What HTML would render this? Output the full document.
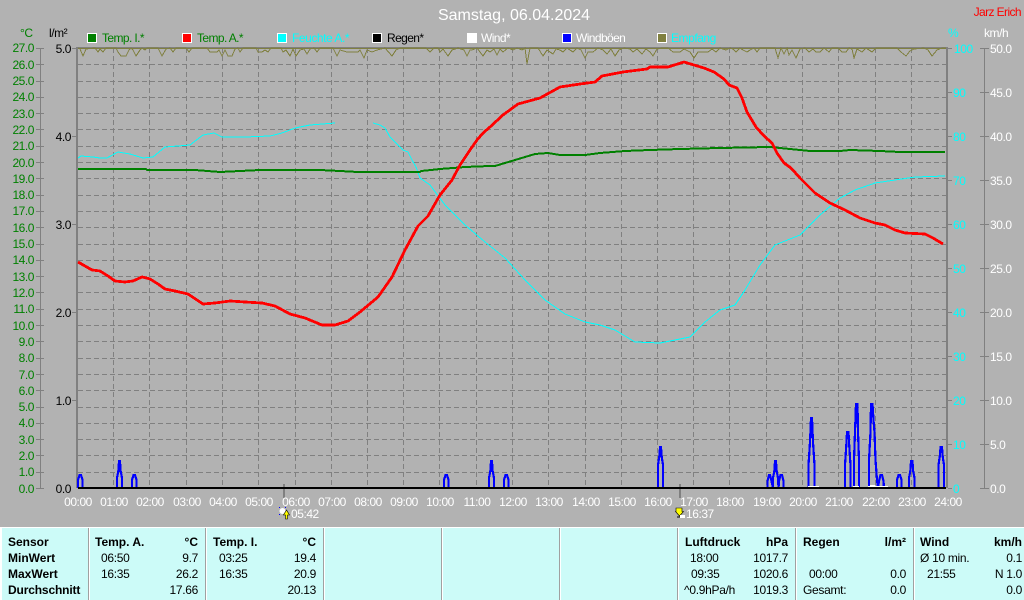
<!DOCTYPE html>
<html><head><meta charset="utf-8"><title>Wetter</title>
<style>
html,body{margin:0;padding:0;background:#b2b2b2;width:1024px;height:600px;overflow:hidden}
svg{display:block;font-family:"Liberation Sans",sans-serif;font-size:12px}
text{letter-spacing:-.45px}
.g text{fill:#008000}
.k text{fill:#000}
.c text{fill:#0ff}
.w text{fill:#fff}
.b{font-weight:bold}
.r{text-anchor:end}
.m{text-anchor:middle}
.t text{fill:#000;letter-spacing:-.3px}
.t text.b{letter-spacing:0}
.t text.d{letter-spacing:-.15px}
.cr{shape-rendering:crispEdges}
</style></head><body>
<svg width="1024" height="600" viewBox="0 0 1024 600" xmlns="http://www.w3.org/2000/svg">
<rect width="1024" height="600" fill="#b2b2b2"/>
<text x="514" y="20" class="m" fill="#fff" style="font-size:16px;letter-spacing:0">Samstag, 06.04.2024</text>
<text x="1021" y="16" class="r" fill="#f00" style="letter-spacing:-.6px">Jarz Erich</text>

<g fill="none" stroke="#808080" stroke-dasharray="5 3" stroke-width="1" class="cr">
<path d="M78 64.5H946M78 81.5H946M78 97.5H946M78 113.5H946M78 129.5H946M78 146.5H946M78 162.5H946M78 178.5H946M78 195.5H946M78 211.5H946M78 227.5H946M78 244.5H946M78 260.5H946M78 276.5H946M78 292.5H946M78 309.5H946M78 325.5H946M78 341.5H946M78 358.5H946M78 374.5H946M78 390.5H946M78 407.5H946M78 423.5H946M78 439.5H946M78 455.5H946M78 472.5H946"/>
<path d="M113.5 48V488M149.5 48V488M186.5 48V488M222.5 48V488M258.5 48V488M295.5 48V488M331.5 48V488M367.5 48V488M403.5 48V488M439.5 48V488M476.5 48V488M512.5 48V488M548.5 48V488M585.5 48V488M621.5 48V488M657.5 48V488M693.5 48V488M729.5 48V488M766.5 48V488M802.5 48V488M838.5 48V488M875.5 48V488M911.5 48V488"/>
</g>

<!-- axes -->
<g fill="#808080">
<rect x="76" y="47" width="872" height="2"/>
<rect x="76" y="47" width="2" height="441"/>
<rect x="946" y="47" width="2" height="441"/>
<rect x="283" y="484" width="2" height="14"/>
<rect x="679" y="484" width="2" height="14"/>
</g>
<g fill="none" stroke="#808080" class="cr">
<path d="M40.5 48V488M36 48.5H44M36 64.5H44M36 81.5H44M36 97.5H44M36 113.5H44M36 129.5H44M36 146.5H44M36 162.5H44M36 178.5H44M36 195.5H44M36 211.5H44M36 227.5H44M36 244.5H44M36 260.5H44M36 276.5H44M36 292.5H44M36 309.5H44M36 325.5H44M36 341.5H44M36 358.5H44M36 374.5H44M36 390.5H44M36 407.5H44M36 423.5H44M36 439.5H44M36 455.5H44M36 472.5H44M36 488.5H44"/>
<path d="M72 48.5H77M72 136.5H77M72 224.5H77M72 312.5H77M72 400.5H77"/>
<path d="M948 48.5H952M948 92.5H952M948 136.5H952M948 180.5H952M948 224.5H952M948 268.5H952M948 312.5H952M948 356.5H952M948 400.5H952M948 444.5H952M948 488.5H952"/>
<path d="M984.5 48V488M980 48.5H989M980 92.5H989M980 136.5H989M980 180.5H989M980 224.5H989M980 268.5H989M980 312.5H989M980 356.5H989M980 400.5H989M980 444.5H989M980 488.5H989"/>
</g>

<!-- axis labels -->
<g class="g">
<text x="20" y="37">°C</text>
<text x="34" y="52" class="r">27.0</text><text x="34" y="69" class="r">26.0</text><text x="34" y="85" class="r">25.0</text><text x="34" y="101" class="r">24.0</text><text x="34" y="118" class="r">23.0</text><text x="34" y="134" class="r">22.0</text><text x="34" y="150" class="r">21.0</text><text x="34" y="167" class="r">20.0</text><text x="34" y="183" class="r">19.0</text><text x="34" y="199" class="r">18.0</text><text x="34" y="215" class="r">17.0</text><text x="34" y="232" class="r">16.0</text><text x="34" y="248" class="r">15.0</text><text x="34" y="264" class="r">14.0</text><text x="34" y="281" class="r">13.0</text><text x="34" y="297" class="r">12.0</text><text x="34" y="313" class="r">11.0</text><text x="34" y="330" class="r">10.0</text><text x="34" y="346" class="r">9.0</text><text x="34" y="362" class="r">8.0</text><text x="34" y="379" class="r">7.0</text><text x="34" y="395" class="r">6.0</text><text x="34" y="411" class="r">5.0</text><text x="34" y="427" class="r">4.0</text><text x="34" y="444" class="r">3.0</text><text x="34" y="460" class="r">2.0</text><text x="34" y="476" class="r">1.0</text><text x="34" y="493" class="r">0.0</text>
</g>
<g class="k">
<text x="49" y="37">l/m²</text>
<text x="71" y="53" class="r">5.0</text><text x="71" y="141" class="r">4.0</text><text x="71" y="229" class="r">3.0</text><text x="71" y="317" class="r">2.0</text><text x="71" y="405" class="r">1.0</text><text x="71" y="493" class="r">0.0</text>
</g>
<g class="c">
<text x="948" y="37">%</text>
<text x="954" y="53">100</text><text x="953" y="97">90</text><text x="953" y="141">80</text><text x="953" y="185">70</text><text x="953" y="229">60</text><text x="953" y="273">50</text><text x="953" y="317">40</text><text x="953" y="361">30</text><text x="953" y="405">20</text><text x="953" y="449">10</text><text x="953" y="493">0</text>
</g>
<g class="w">
<text x="984" y="37">km/h</text>
<text x="990" y="53">50.0</text><text x="990" y="97">45.0</text><text x="990" y="141">40.0</text><text x="990" y="185">35.0</text><text x="990" y="229">30.0</text><text x="990" y="273">25.0</text><text x="990" y="317">20.0</text><text x="990" y="361">15.0</text><text x="990" y="405">10.0</text><text x="990" y="449">5.0</text><text x="990" y="493">0.0</text>
</g>

<!-- legend -->
<g stroke="#fff" stroke-width="1" class="cr">
<rect x="87.5" y="33.5" width="9" height="9" fill="#008000"/>
<rect x="182.5" y="33.5" width="9" height="9" fill="#f00"/>
<rect x="277.5" y="33.5" width="9" height="9" fill="#0ff"/>
<rect x="372.5" y="33.5" width="9" height="9" fill="#000"/>
<rect x="467.5" y="33.5" width="9" height="9" fill="#fff"/>
<rect x="562.5" y="33.5" width="9" height="9" fill="#00f"/>
<rect x="657.5" y="33.5" width="9" height="9" fill="#808040"/>
</g>
<text x="102" y="42" fill="#008000" style="letter-spacing:-.6px">Temp. I.*</text>
<text x="197" y="42" fill="#008000" style="letter-spacing:-.6px">Temp. A.*</text>
<text x="292" y="42" fill="#0ff">Feuchte A.*</text>
<text x="387" y="42" fill="#000" style="letter-spacing:-.6px">Regen*</text>
<text x="481" y="42" fill="#fff" style="letter-spacing:-.6px">Wind*</text>
<text x="576" y="42" fill="#fff" style="letter-spacing:-.6px">Windböen</text>
<text x="671" y="42" fill="#0ff">Empfang</text>

<!-- reception -->
<polyline fill="none" stroke="#808040" stroke-width="1" class="cr" points="78,48 80,49 83,56 86,49 95,48 98,52 100,49 103,52 106,48 116,48 118,52 121,56 126,56 129,50 131,48 133,50 136,56 140,50 142,48 145,50 147,48 158,48 162,56 166,49 170,48 173,52 176,48 186,48 189,52 192,48 207,48 210,52 217,52 219,50 222,56 225,50 228,56 232,56 235,49 238,48 240,52 243,48 256,48 258,52 262,52 265,50 268,52 271,48 281,48 283,52 286,50 290,56 293,49 296,56 300,50 304,49 307,54 310,49 314,48 317,52 320,48 333,48 337,56 340,50 347,52 358,52 360,50 364,58 367,50 372,52 377,50 385,48 392,56 396,50 400,48 426,48 430,52 434,48 438,48 440,52 443,49 448,56 452,50 458,48 464,50 467,56 470,50 472,50 477,48 483,56 487,50 490,52 494,49 497,55 500,49 503,52 508,48 513,50 517,48 522,50 525,48 527,64 530,48 538,48 543,56 547,50 553,54 556,49 560,50 563,52 567,48 573,52 577,48 581,50 585,58 588,52 593,52 598,48 603,50 607,54 611,49 615,56 619,50 624,48 630,49 633,52 637,49 642,54 646,49 650,52 653,56 657,49 662,48 668,48 673,52 680,52 684,49 690,52 694,58 698,52 708,52 712,49 716,52 720,48 726,50 730,48 733,49 736,52 740,48 743,50 747,52 750,50 754,48 757,52 760,48 775,48 778,58 781,48 784,54 787,48 789,55 792,50 796,58 800,49 805,48 809,52 813,49 816,52 820,52 824,48 829,52 832,48 838,48 842,52 846,52 849,48 852,49 854,58 857,49 862,52 866,48 872,52 876,48 897,48 901,52 906,56 910,51 914,49 924,48 928,50 932,56 937,50 942,48 946,48"/>
<rect x="78" y="48" width="868" height="1" fill="#808040"/>

<!-- gusts -->
<g fill="none" stroke="#00f" stroke-width="2.2" class="cr">
<polyline points="78,488 78,480 79.5,475 81,475 82.5,480 82.5,488"/>
<polyline points="117,488 117,478 118.5,470 119,461 120,461 120.5,470 122,478 122,488"/>
<polyline points="132,488 132,480 133.5,475 135,475 136.5,480 136.5,488"/>
<polyline points="444,488 444,480 445.5,475 447,475 448.5,480 448.5,488"/>
<polyline points="489,488 489,478 490.5,470 491,461 492,461 492.5,470 494,478 494,488"/>
<polyline points="504,488 504,480 505.5,475 507,475 508.5,480 508.5,488"/>
<polyline points="658,488 658,465 659.5,455 660,447 661,447 661.5,455 663,465 663,488"/>
<polyline points="767.5,488 767.5,481 769,475 770,475 771.5,481 773,488 773,478 774.5,470 775,461 776,461 776.5,470 778,478 778.5,488 779,481 780.5,475 782,475 783.5,481 783.5,488"/>
<polyline points="808.5,488 808.5,465 810,442 811,418 812,418 813,442 814.5,465 814.5,488"/>
<polyline points="845,488 845,465 846.5,442 847,432 848.5,432 849,442 850.5,465 850.5,488"/>
<polyline points="854,488 854,460 855,432 856,404 857.5,404 858,432 859,460 859,488"/>
<polyline points="869,488 869,460 870.5,432 871,404 872.5,404 873.5,420 874.5,432 875.5,460 877,480 878,488 879,481 880.5,475 882,475 883.5,481 884,488"/>
<polyline points="897,488 897,480 898.5,475 900,475 901.5,480 901.5,488"/>
<polyline points="909,488 909,478 910.5,470 911,461 912.5,461 913,470 914.5,478 914.5,488"/>
<polyline points="938.5,488 938.5,465 940,455 940.5,447 942,447 942.5,455 944,465 944,488"/>
</g>
<g fill="#fff">
<rect x="808" y="486" width="11" height="1"/>
<rect x="853" y="486" width="6" height="1"/>
<rect x="868" y="486" width="20" height="1"/>
<rect x="870" y="485" width="5" height="1"/>
</g>

<!-- humidity -->
<g fill="none" stroke="#0ff" stroke-width="1" class="cr">
<polyline points="78,158 81,156 93,157 100,158 107,158 118,152 130,154 143,158 153,157 165,147 178,146 190,145 203,135 214,133 222,137 245,137 270,136 282,133 295,128 310,125 335,123"/>
<polyline points="373,123 380,125 385,128 390,137 395,142 400,147 403,150 408,152 412,160 416,167 420,178 430,185 445,205 465,225 485,242 505,258 525,280 545,300 565,314 585,322 600,325 615,330 635,342 660,343 690,337 705,322 720,310 735,305 745,290 760,265 775,245 800,235 820,215 840,198 855,190 875,183 895,180 915,177 945,176"/>
</g>

<!-- indoor temp -->
<polyline fill="none" stroke="#008000" stroke-width="2" class="cr" points="78,169 146,169 147,170 195,170 220,172 240,171 260,170 320,170 340,171 358,172 420,172 421,171 431,170 440,169 453,168 465,167 490,166 495,166 515,160 535,154 548,153 560,155 585,155 600,153 625,151 650,150 680,149 720,148 770,147 790,149 810,151 840,151 850,150 880,151 900,152 945,152"/>

<!-- outdoor temp -->
<polyline fill="none" stroke="#f00" stroke-width="2.8" stroke-linejoin="round" class="cr" points="78,262 85,266 92,270 100,271 108,276 115,281 125,282 133,281 142,277 150,279 158,284 165,289 175,291 188,294 203,304 215,303 230,301 245,302 262,303 275,306 290,314 305,318 322,325 335,325 348,321 360,312 378,297 392,277 405,250 418,226 428,216 440,195 452,180 460,165 470,150 477,140 483,133 490,127 503,115 518,104 540,98 560,87 580,84 595,82 602,76 623,72 647,69 650,67 668,67 684,62 704,68 714,72 724,79 729,85 737,88 742,98 747,112 756,127 764,136 772,143 777,153 784,163 791,168 800,178 815,193 830,203 845,210 860,218 875,223 885,225 895,230 905,233 925,234 933,238 943,244"/>

<rect x="78" y="487" width="868" height="2" fill="#000"/>

<!-- x labels -->
<g class="w">
<text x="78" y="506" class="m">00:00</text><text x="114" y="506" class="m">01:00</text><text x="150" y="506" class="m">02:00</text><text x="187" y="506" class="m">03:00</text><text x="223" y="506" class="m">04:00</text><text x="259" y="506" class="m">05:00</text><text x="296" y="506" class="m">06:00</text><text x="332" y="506" class="m">07:00</text><text x="368" y="506" class="m">08:00</text><text x="404" y="506" class="m">09:00</text><text x="440" y="506" class="m">10:00</text><text x="477" y="506" class="m">11:00</text><text x="513" y="506" class="m">12:00</text><text x="549" y="506" class="m">13:00</text><text x="586" y="506" class="m">14:00</text><text x="622" y="506" class="m">15:00</text><text x="658" y="506" class="m">16:00</text><text x="694" y="506" class="m">17:00</text><text x="730" y="506" class="m">18:00</text><text x="767" y="506" class="m">19:00</text><text x="803" y="506" class="m">20:00</text><text x="839" y="506" class="m">21:00</text><text x="876" y="506" class="m">22:00</text><text x="912" y="506" class="m">23:00</text><text x="948" y="506" class="m">24:00</text>
<text x="291" y="518">05:42</text>
<text x="686" y="518">16:37</text>
</g>
<!-- sunrise icon -->
<circle cx="282.5" cy="511" r="3" fill="#fff"/>
<path d="M279 507.5h1M285 507.5h1M279 514.5h1" stroke="#00f" stroke-width="1"/>
<path d="M286.5 510L283.5 515H285.5V519H287.5V515H289.5Z" fill="#ff0" stroke="#000" stroke-width=".6"/>
<!-- sunset icon -->
<path d="M676 508H682V511.5H683.5L679.5 516L675.5 511.5H676Z" fill="#ff0" stroke="#000" stroke-width=".6"/>
<rect x="680" y="515" width="5" height="3" fill="#fff"/>
<path d="M677 517h3" stroke="#000" stroke-width="1"/>

<!-- table -->
<rect x="0" y="527" width="1024" height="73" fill="#ccfbf8"/>
<rect x="0" y="527" width="1024" height="1" fill="#fff"/>
<rect x="0" y="527" width="2" height="73" fill="#fff"/>
<g fill="#a0a0a0">
<rect x="88" y="528" width="1" height="72"/><rect x="205" y="528" width="1" height="72"/><rect x="323" y="528" width="1" height="72"/><rect x="441" y="528" width="1" height="72"/><rect x="559" y="528" width="1" height="72"/><rect x="677" y="528" width="1" height="72"/><rect x="795" y="528" width="1" height="72"/><rect x="913" y="528" width="1" height="72"/>
</g>
<g fill="#fff">
<rect x="89" y="528" width="1" height="72"/><rect x="206" y="528" width="1" height="72"/><rect x="324" y="528" width="1" height="72"/><rect x="442" y="528" width="1" height="72"/><rect x="560" y="528" width="1" height="72"/><rect x="678" y="528" width="1" height="72"/><rect x="796" y="528" width="1" height="72"/><rect x="914" y="528" width="1" height="72"/>
</g>
<g class="t">
<text x="8" y="546" class="b">Sensor</text><text x="8" y="562" class="b">MinWert</text><text x="8" y="578" class="b">MaxWert</text><text x="8" y="594" class="b d">Durchschnitt</text>

<text x="95" y="546" class="b">Temp. A.</text><text x="198" y="546" class="b r">°C</text>
<text x="101" y="562">06:50</text><text x="198" y="562" class="r">9.7</text>
<text x="101" y="578">16:35</text><text x="198" y="578" class="r">26.2</text>
<text x="198" y="594" class="r">17.66</text>

<text x="213" y="546" class="b">Temp. I.</text><text x="316" y="546" class="b r">°C</text>
<text x="219" y="562">03:25</text><text x="316" y="562" class="r">19.4</text>
<text x="219" y="578">16:35</text><text x="316" y="578" class="r">20.9</text>
<text x="316" y="594" class="r">20.13</text>

<text x="685" y="546" class="b">Luftdruck</text><text x="788" y="546" class="b r">hPa</text>
<text x="690" y="562">18:00</text><text x="788" y="562" class="r">1017.7</text>
<text x="691" y="578">09:35</text><text x="788" y="578" class="r">1020.6</text>
<text x="684" y="594">^0.9hPa/h</text><text x="788" y="594" class="r">1019.3</text>

<text x="803" y="546" class="b">Regen</text><text x="906" y="546" class="b r">l/m²</text>
<text x="809" y="578">00:00</text><text x="906" y="578" class="r">0.0</text>
<text x="803" y="594">Gesamt:</text><text x="906" y="594" class="r">0.0</text>

<text x="920" y="546" class="b">Wind</text><text x="1022" y="546" class="b r">km/h</text>
<text x="920" y="562">Ø 10 min.</text><text x="1022" y="562" class="r">0.1</text>
<text x="927" y="578">21:55</text><text x="1022" y="578" class="r">N 1.0</text>
<text x="1022" y="594" class="r">0.0</text>
</g>
</svg>
</body></html>
